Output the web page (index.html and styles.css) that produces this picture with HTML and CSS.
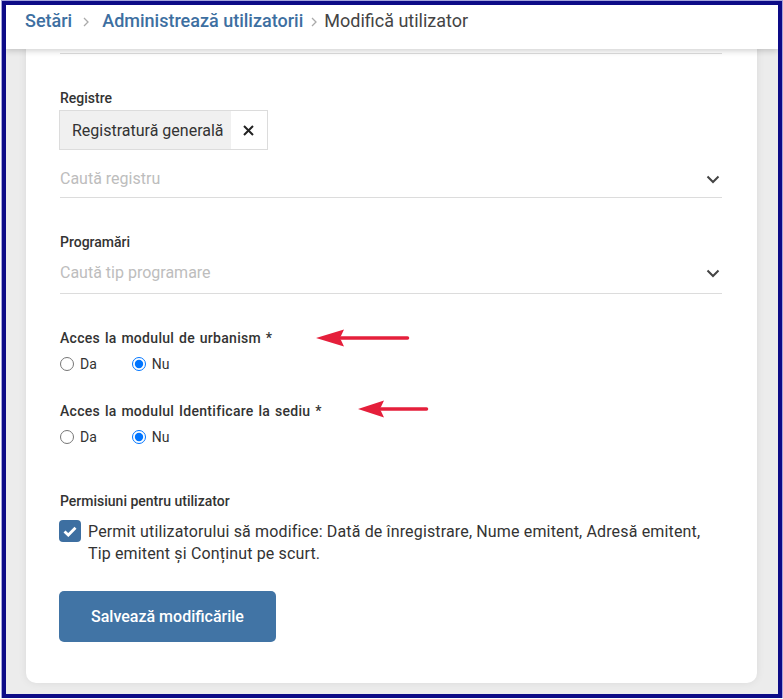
FILE: index.html
```html
<!DOCTYPE html>
<html lang="ro">
<head>
  <meta charset="UTF-8" />
  <meta name="viewport" content="width=device-width, initial-scale=1.0"/>
  <title>Modifică utilizator</title>
  <link rel="stylesheet" href="styles.css">
</head>
<body>
  <div class="screen">
    <header class="crumbs">
      <a class="crumb" href="#">Setări</a>
      <svg class="sep sep-first" width="6" height="10" viewBox="0 0 6 10"><path d="M1 1l4 4-4 4" fill="none" stroke="#aaa" stroke-width="1.3"/></svg>
      <a class="crumb" href="#">Administrează utilizatorii</a>
      <svg class="sep" width="6" height="10" viewBox="0 0 6 10"><path d="M1 1l4 4-4 4" fill="none" stroke="#aaa" stroke-width="1.3"/></svg>
      <span class="crumb-current">Modifică utilizator</span>
    </header>

    <main class="content">
      <form class="card">
        <div class="field">
          <label class="label">Roluri</label>
          <div class="select"><span class="placeholder">Caută rol</span></div>
        </div>

        <div class="field field-registre">
          <label class="label">Registre</label>
          <div class="chips">
            <span class="chip">
              <span class="chip-text">Registratură generală</span>
              <button type="button" class="chip-remove">
                <svg width="11" height="11" viewBox="0 0 11 11"><path d="M1 1l9 9M10 1l-9 9" stroke="#222" stroke-width="2"/></svg>
              </button>
            </span>
          </div>
          <div class="select">
            <span class="placeholder">Caută registru</span>
            <svg class="chevron" width="14" height="9" viewBox="0 0 14 9"><path d="M1.5 1.5l5.5 5.5 5.5-5.5" fill="none" stroke="#444" stroke-width="2"/></svg>
          </div>
        </div>

        <div class="field">
          <label class="label">Programări</label>
          <div class="select">
            <span class="placeholder">Caută tip programare</span>
            <svg class="chevron" width="14" height="9" viewBox="0 0 14 9"><path d="M1.5 1.5l5.5 5.5 5.5-5.5" fill="none" stroke="#444" stroke-width="2"/></svg>
          </div>
        </div>

        <div class="field field-radio">
          <label class="label label-wide">Acces la modulul de urbanism *</label>
          <svg class="arrow arrow-one" width="94" height="18" viewBox="0 0 94 18">
            <path d="M0 9L28 0.5 24 9 28 17.5Z" fill="#e51f3b"/>
            <path d="M25 9H91.5" stroke="#e51f3b" stroke-width="3.5" stroke-linecap="round"/>
          </svg>
          <div class="radios">
            <label class="option"><input type="radio" name="urbanism"> Da</label>
            <label class="option"><input type="radio" name="urbanism" checked> Nu</label>
          </div>
        </div>

        <div class="field field-radio field-tight">
          <label class="label label-wide">Acces la modulul Identificare la sediu *</label>
          <svg class="arrow arrow-two" width="71" height="18" viewBox="0 0 71 18">
            <path d="M0 9L26 0.5 22 9 26 17.5Z" fill="#e51f3b"/>
            <path d="M23 9H68.5" stroke="#e51f3b" stroke-width="3.5" stroke-linecap="round"/>
          </svg>
          <div class="radios">
            <label class="option"><input type="radio" name="sediu"> Da</label>
            <label class="option"><input type="radio" name="sediu" checked> Nu</label>
          </div>
        </div>

        <div class="field field-perms">
          <label class="label">Permisiuni pentru utilizator</label>
          <div class="check-row">
            <span class="checkbox">
              <svg width="14" height="11" viewBox="0 0 14 11"><path d="M1.5 5.5l3.8 3.6L12.5 1.8" fill="none" stroke="#fff" stroke-width="2.8"/></svg>
            </span>
            <span class="check-text">Permit utilizatorului să modifice: Dată de înregistrare, Nume emitent, Adresă emitent, Tip emitent și Conținut pe scurt.</span>
          </div>
        </div>

        <button type="button" class="save">Salvează modificările</button>
      </form>
    </main>
  </div>
</body>
</html>
```

FILE: styles.css
```css
:root {
  --blue: #3d6fa1;
  --text: #333;
  --line: #dcdcdc;
  --muted: #bdbdbd;
}

body {
  margin: 0;
  font-family: Roboto, "Noto Sans", sans-serif;
  color: var(--text);
  background: #fff;
}

.screen {
  width: 780px;
  height: 697px;
  margin: 1px 0 0 2px;
  box-sizing: border-box;
  border: 4px solid #0d0b87;
  box-shadow: 0 0 0 1px #a4a4dc;
  display: flex;
  flex-direction: column;
  overflow: hidden;
  background: #ececec;
}

.crumbs {
  position: relative;
  z-index: 1;
  height: 44px;
  flex-shrink: 0;
  box-sizing: border-box;
  padding: 2px 19px 0;
  display: flex;
  align-items: flex-start;
  background: #fff;
  box-shadow: 0 2px 6px rgba(0, 0, 0, 0.18);
  font-size: 18px;
  line-height: 28px;
}

.crumb {
  color: var(--blue);
  font-weight: 500;
  text-decoration: none;
}

.sep {
  margin: 10px 7px 0 8px;
}

.sep-first {
  margin: 10px 13px 0 11px;
}

.crumb-current {
  color: #444;
}

.content {
  flex: 1;
  display: flex;
  flex-direction: column;
  justify-content: flex-end;
  overflow: hidden;
  padding: 0 21px 11px 20px;
}

.card {
  flex-shrink: 0;
  background: #fff;
  border-radius: 0 0 10px 10px;
  box-shadow: 0 0 8px rgba(0, 0, 0, 0.08);
  padding: 0 35px 41px 34px;
}

.field {
  position: relative;
  margin-top: 34px;
}

.field:first-child {
  margin-top: 0;
}

.label {
  display: block;
  font-size: 14px;
  font-weight: 500;
  line-height: 20px;
  color: var(--text);
}

.label-wide {
  letter-spacing: 0.3px;
  word-spacing: 1px;
}

.chips {
  margin-top: 2px;
  margin-bottom: 6px;
}

.chip {
  display: inline-flex;
  height: 40px;
  box-sizing: border-box;
  border: 1px solid var(--line);
  margin-left: -1px;
}

.chip-text {
  display: flex;
  align-items: center;
  padding: 0 7px 0 12px;
  background: #f0f0f0;
  font-size: 16px;
}

.chip-remove {
  width: 36px;
  border: none;
  background: #fff;
  padding: 0;
  display: flex;
  align-items: center;
  justify-content: center;
}

.select {
  display: flex;
  align-items: center;
  justify-content: space-between;
  padding: 11px 0 10px;
  border-bottom: 1px solid var(--line);
  font-size: 16px;
  line-height: 20px;
}

.field-registre .select {
  padding: 13px 0 8px;
}

.placeholder {
  color: var(--muted);
}

.chevron {
  margin-right: 2px;
}

.arrow {
  position: absolute;
}

.arrow-one {
  left: 256px;
  top: 1px;
}

.arrow-two {
  left: 298px;
  top: -1px;
}

.radios {
  display: flex;
  gap: 35px;
  margin-top: 6px;
  font-size: 14px;
  line-height: 20px;
}

.option {
  display: flex;
  align-items: center;
  gap: 6px;
}

.option input {
  width: 14px;
  height: 14px;
  margin: 0;
}

.field-tight {
  margin-top: 27px;
}

.field-perms {
  margin-top: 44px;
}

.check-row {
  display: flex;
  align-items: flex-start;
  gap: 7px;
  margin-top: 10px;
}

.checkbox {
  width: 22px;
  height: 22px;
  flex-shrink: 0;
  margin: -1px 0 0 -1px;
  border-radius: 4px;
  background: var(--blue);
  display: flex;
  align-items: center;
  justify-content: center;
}

.check-text {
  font-size: 16px;
  line-height: 22px;
  letter-spacing: 0.15px;
}

.save {
  display: block;
  margin: 26px 0 0 -1px;
  width: 217px;
  height: 51px;
  border: none;
  border-radius: 5px;
  background: #4174a5;
  color: #fff;
  font-family: inherit;
  font-size: 16px;
  font-weight: 500;
}
```
